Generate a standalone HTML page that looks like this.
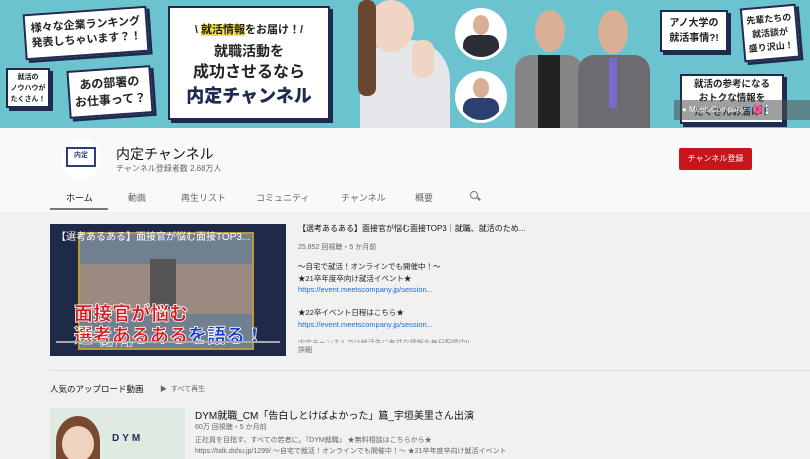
<!DOCTYPE html>
<html><head><meta charset="utf-8"><style>
*{margin:0;padding:0;box-sizing:border-box}
body{width:810px;height:459px;overflow:hidden;background:#f1f1f1;font-family:"Liberation Sans","Noto Sans CJK JP",sans-serif;position:relative}
.a{position:absolute}
.bub{position:absolute;background:#fff;border:2px solid #1e2a50;box-shadow:3px 3px 0 #1e2a50;color:#222;text-align:center;font-size:11px;line-height:15px;font-weight:bold;display:flex;align-items:center;justify-content:center;white-space:nowrap}
.circ{position:absolute;border-radius:50%;background:#fff;border:3px solid #fff;overflow:hidden}
.tab{position:absolute;top:191px;font-size:9px;color:#666}
</style></head><body>
<div class="a" style="left:0;top:0;width:810px;height:128px;background:#6ac3ce"></div>
<div class="bub" style="left:24px;top:10px;width:124px;height:46px;transform:rotate(-4deg)">様々な企業ランキング<br>発表しちゃいます？！</div>
<div class="bub" style="left:6px;top:68px;width:44px;height:40px;font-size:7px;line-height:11px">就活の<br>ノウハウが<br>たくさん！</div>
<div class="bub" style="left:68px;top:68px;width:84px;height:48px;font-size:12px;line-height:17px;transform:rotate(-4deg)">あの部署の<br>お仕事って？</div>
<div class="bub" style="left:168px;top:6px;width:162px;height:114px;flex-direction:column;font-size:14px;line-height:21px">
<div style="font-size:11px">\ <span style="background:#f3e04c">就活情報</span>をお届け！/</div>
<div>就職活動を</div><div style="font-size:16px">成功させるなら</div>
<div style="font-size:18px;color:#1e2a50;font-weight:900;margin-top:3px">内定チャンネル</div></div>
<div class="a" style="left:360px;top:40px;width:90px;height:88px;background:#e4e6ea;border-radius:40px 40px 0 0"></div>
<div class="a" style="left:368px;top:0;width:46px;height:52px;background:#f1d5c4;border-radius:50%"></div>
<div class="a" style="left:358px;top:0;width:18px;height:96px;background:#6b4630;border-radius:8px"></div>
<div class="a" style="left:412px;top:40px;width:22px;height:38px;background:#f1d5c4;border-radius:10px"></div>
<div class="circ" style="left:455px;top:8px;width:52px;height:52px"><div style="margin:4px auto 0;width:16px;height:20px;background:#d9b096;border-radius:50%"></div><div style="margin:0 auto;width:36px;height:24px;background:#2c2c34;border-radius:10px 10px 0 0"></div></div>
<div class="circ" style="left:455px;top:71px;width:52px;height:52px"><div style="margin:4px auto 0;width:16px;height:20px;background:#d9b096;border-radius:50%"></div><div style="margin:0 auto;width:36px;height:24px;background:#2b3f70;border-radius:10px 10px 0 0"></div></div>
<div class="a" style="left:515px;top:55px;width:68px;height:73px;background:#858585;border-radius:16px 16px 0 0"></div>
<div class="a" style="left:538px;top:55px;width:22px;height:73px;background:#222"></div>
<div class="a" style="left:535px;top:10px;width:30px;height:42px;background:#d9b096;border-radius:50%"></div>
<div class="a" style="left:578px;top:55px;width:72px;height:73px;background:#6b6b70;border-radius:16px 16px 0 0"></div>
<div class="a" style="left:609px;top:58px;width:8px;height:50px;background:#7a6ad0"></div>
<div class="a" style="left:598px;top:10px;width:30px;height:44px;background:#d9b096;border-radius:50%"></div>
<div class="bub" style="left:660px;top:10px;width:68px;height:42px;font-size:10px">アノ大学の<br>就活事情?!</div>
<div class="bub" style="left:742px;top:6px;width:56px;height:54px;font-size:9px;line-height:14px;transform:rotate(-5deg)">先輩たちの<br>就活談が<br>盛り沢山！</div>
<div class="bub" style="left:680px;top:74px;width:104px;height:50px;font-size:9.5px;line-height:14px">就活の参考になる<br>おトクな情報を<br>たくさんお届け！</div>
<div class="a" style="left:674px;top:100px;width:136px;height:20px;background:rgba(80,80,80,.55);color:#eee;font-size:8px;line-height:20px;padding-left:8px;white-space:nowrap">● MeetsCompany <span style="color:#1da1f2">▾</span> <span style="background:#d62976;color:#fff">◎</span> &nbsp;<span style="color:#3b5998;background:#fff">f</span></div>

<div class="a" style="left:0;top:128px;width:810px;height:84px;background:#f9f9f9"></div>
<div class="a" style="left:61px;top:139px;width:40px;height:40px;border-radius:50%;background:#fff"></div>
<div class="a" style="left:66px;top:147px;width:30px;height:20px;border:2px solid #2a3f7a;font-size:7px;font-weight:bold;color:#2a3f7a;text-align:center;line-height:14px">内定</div>
<div class="a" style="left:116px;top:144px;font-size:14px;color:#111">内定チャンネル</div>
<div class="a" style="left:116px;top:163px;font-size:8px;color:#666">チャンネル登録者数 2.68万人</div>
<div class="a" style="left:679px;top:148px;width:73px;height:22px;background:#c8141c;color:#fff;font-size:8px;text-align:center;line-height:22px;border-radius:2px">チャンネル登録</div>
<div class="tab" style="left:66px;color:#111">ホーム</div>
<div class="tab" style="left:128px">動画</div>
<div class="tab" style="left:181px">再生リスト</div>
<div class="tab" style="left:256px">コミュニティ</div>
<div class="tab" style="left:341px">チャンネル</div>
<div class="tab" style="left:415px">概要</div>
<div class="a" style="left:470px;top:191px;width:8px;height:8px;border:1.5px solid #777;border-radius:50%"></div>
<div class="a" style="left:477px;top:198px;width:4px;height:1.5px;background:#777;transform:rotate(45deg)"></div>
<div class="a" style="left:50px;top:208px;width:58px;height:2px;background:#777"></div>

<div class="a" style="left:50px;top:224px;width:236px;height:132px;background:#1e2a48;overflow:hidden">
<div class="a" style="left:28px;top:8px;width:176px;height:118px;background:#708090;border:2px solid #b89a3a"></div>
<div class="a" style="left:30px;top:40px;width:172px;height:50px;background:#9a8a80"></div>
<div class="a" style="left:100px;top:35px;width:26px;height:50px;background:#555"></div>
<div class="a" style="left:6px;top:4px;color:#fff;font-size:10px;white-space:nowrap">【選考あるある】面接官が悩む面接TOP3...</div>
<div class="a" style="left:24px;top:80px;color:#d41c1c;font-size:19px;font-weight:900;-webkit-text-stroke:0.8px #fff;white-space:nowrap;line-height:22px">面接官が悩む<br>選考あるある<span style="color:#1a3bbf">を語る！</span></div>
<div class="a" style="left:6px;top:117px;width:224px;height:1.5px;background:#aaa"></div>
<div class="a" style="left:50px;top:118px;color:#fff;font-size:7px">0:02 / 7:12</div>
</div>
<div class="a" style="left:298px;top:223px;font-size:8px;color:#111">【選考あるある】面接官が悩む面接TOP3｜就職、就活のため...</div>
<div class="a" style="left:298px;top:242px;font-size:7px;color:#666">25,852 回視聴・5 か月前</div>
<div class="a" style="left:298px;top:261px;font-size:7.5px;color:#222;line-height:11.5px">〜自宅で就活！オンラインでも開催中！〜<br>★21卒年度卒向け就活イベント★<br><span style="color:#1a6fd6">https://event.meetscompany.jp/session...</span><br><br>★22卒イベント日程はこちら★<br><span style="color:#1a6fd6">https://event.meetscompany.jp/session...</span></div>
<div class="a" style="left:298px;top:338px;font-size:7px;color:#888;height:5px;overflow:hidden">内定チャンネルでは就活生に有益な情報を毎日配信中!!</div>
<div class="a" style="left:298px;top:345px;font-size:7px;color:#666">詳細</div>
<div class="a" style="left:50px;top:370px;width:760px;height:1px;background:#ddd"></div>
<div class="a" style="left:50px;top:383px;font-size:8.5px;color:#111">人気のアップロード動画</div>
<div class="a" style="left:160px;top:384px;font-size:7px;color:#666">▶ &nbsp;すべて再生</div>
<div class="a" style="left:50px;top:408px;width:135px;height:51px;background:#dfeae3;overflow:hidden">
<div class="a" style="left:6px;top:8px;width:44px;height:50px;background:#7a4a30;border-radius:50% 50% 0 0"></div>
<div class="a" style="left:12px;top:18px;width:32px;height:36px;background:#f0d2c0;border-radius:50%"></div>
<div class="a" style="left:62px;top:25px;font-size:10px;font-weight:bold;color:#1e2a50;letter-spacing:3px">DYM</div></div>
<div class="a" style="left:195px;top:407px;font-size:10px;color:#111">DYM就職_CM「告白しとけばよかった」篇_宇垣美里さん出演</div>
<div class="a" style="left:195px;top:422px;font-size:7px;color:#666">60万 回視聴・5 か月前</div>
<div class="a" style="left:195px;top:435px;font-size:7px;color:#666;line-height:11px;white-space:nowrap">正社員を目指す、すべての若者に。『DYM就職』 ★無料相談はこちらから★<br>https://talk.dshu.jp/1299/ 〜自宅で就活！オンラインでも開催中！〜 ★21卒年度卒向け就活イベント</div>
</body></html>
